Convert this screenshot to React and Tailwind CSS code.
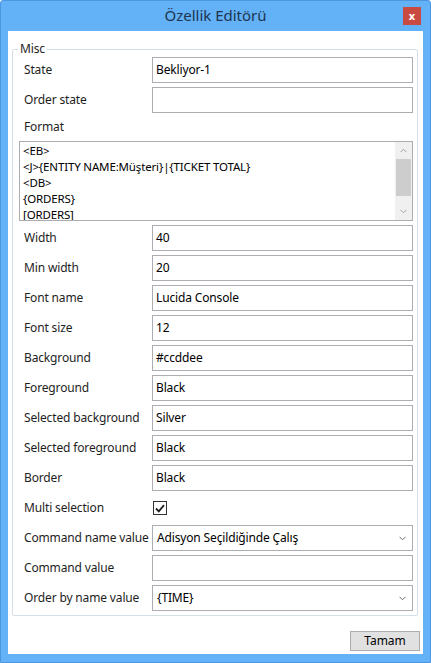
import React from 'react'

const font = "font-['Segoe_UI','Noto_Sans',sans-serif]"

function Row({ label, children }) {
  return (
    <div className="flex h-[26px] items-center">
      <div className="w-[133px] pl-[5px] text-[12px] tracking-[-0.15px] whitespace-nowrap text-[#1e1e1e]">{label}</div>
      <div className="flex-1 h-full flex items-center">{children}</div>
    </div>
  )
}

function TextInput({ value }) {
  return (
    <div className="w-full h-full border border-[#abadb3] bg-white flex items-center px-[3px] text-[12px] tracking-[-0.15px] text-black">
      {value}
    </div>
  )
}

function Select({ value }) {
  return (
    <div className="w-full h-full border border-[#abadb3] bg-white flex items-center justify-between pl-[4px] pr-[6px] text-[12px] tracking-[-0.15px] text-black">
      <span>{value}</span>
      <svg width="7" height="5" viewBox="0 0 7 5">
        <path d="M0.5 0.8 L3.5 3.8 L6.5 0.8" fill="none" stroke="#6d6d6d" strokeWidth="1" />
      </svg>
    </div>
  )
}

export default function App() {
  const formatLines = [
    '<EB>',
    '<J>{ENTITY NAME:Müşteri}|{TICKET TOTAL}',
    '<DB>',
    '{ORDERS}',
    '[ORDERS]',
  ]

  return (
    <div className={`w-[431px] h-[663px] bg-[#63b1f6] border border-[#4a96e0] rounded-t-[3px] flex flex-col px-[7px] pb-[8px] ${font}`}>
      <div className="h-[30px] relative flex items-center justify-center">
        <span className="text-[15px] text-[#1d3550] mt-[-1px]">Özellik Editörü</span>
        <div className="absolute right-[2px] top-[6px] w-[18px] h-[18px] bg-[#c84a40] flex items-center justify-center">
          <span className="text-white text-[11px] font-bold leading-none mt-[-2px]">x</span>
        </div>
      </div>

      <div className="flex-1 bg-white flex flex-col">
        <fieldset className="mt-[10px] ml-[4px] mr-[5px] border border-[#d5dfe5] rounded-[2px] pl-[6px] pr-[4px] pb-[4px]">
          <legend className="ml-[-1px] px-[2px] text-[12px] tracking-[-0.15px] leading-[16px] text-[#1e1e1e]">Misc</legend>
          <div className="flex flex-col gap-[4px]">
            <Row label="State"><TextInput value="Bekliyor-1" /></Row>
            <Row label="Order state"><TextInput value="" /></Row>
            <div className="h-[20px] flex items-center pl-[5px] text-[12px] tracking-[-0.15px] text-[#1e1e1e]">Format</div>
            <div className="h-[80px] border border-[#abadb3] flex">
              <div className="flex-1 overflow-hidden pl-[3px] pt-[1px] text-[11.5px] tracking-[-0.15px] leading-[16px] text-black">
                {formatLines.map((l, i) => (
                  <div key={i} className="whitespace-pre">{l}</div>
                ))}
              </div>
              <div className="w-[17px] bg-[#f0f0f0] flex flex-col">
                <div className="h-[17px] flex items-center justify-center">
                  <svg width="7" height="5" viewBox="0 0 7 5">
                    <path d="M0.5 4.2 L3.5 1.2 L6.5 4.2" fill="none" stroke="#a0a0a0" strokeWidth="1" />
                  </svg>
                </div>
                <div className="mx-[1px] h-[37px] bg-[#cdcdcd]" />
                <div className="flex-1" />
                <div className="h-[17px] flex items-center justify-center">
                  <svg width="7" height="5" viewBox="0 0 7 5">
                    <path d="M0.5 0.8 L3.5 3.8 L6.5 0.8" fill="none" stroke="#a0a0a0" strokeWidth="1" />
                  </svg>
                </div>
              </div>
            </div>
            <Row label="Width"><TextInput value="40" /></Row>
            <Row label="Min width"><TextInput value="20" /></Row>
            <Row label="Font name"><TextInput value="Lucida Console" /></Row>
            <Row label="Font size"><TextInput value="12" /></Row>
            <Row label="Background"><TextInput value="#ccddee" /></Row>
            <Row label="Foreground"><TextInput value="Black" /></Row>
            <Row label="Selected background"><TextInput value="Silver" /></Row>
            <Row label="Selected foreground"><TextInput value="Black" /></Row>
            <Row label="Border"><TextInput value="Black" /></Row>
            <Row label="Multi selection">
              <div className="w-[14px] h-[14px] border border-[#333333] bg-white flex items-center justify-center ml-[1px]">
                <svg width="10" height="9" viewBox="0 0 10 9">
                  <path d="M1 4.5 L3.8 7.3 L9 1.2" fill="none" stroke="#1e1e1e" strokeWidth="1.8" />
                </svg>
              </div>
            </Row>
            <Row label="Command name value"><Select value="Adisyon Seçildiğinde Çalış" /></Row>
            <Row label="Command value"><TextInput value="" /></Row>
            <Row label="Order by name value"><Select value="{TIME}" /></Row>
          </div>
        </fieldset>

        <div className="flex-1" />
        <div className="flex justify-end pr-[3px] pb-[3px]">
          <button className="w-[70px] h-[20px] bg-[#e1e1e1] border border-[#adadad] text-[12px] text-black leading-none">
            Tamam
          </button>
        </div>
      </div>
    </div>
  )
}
